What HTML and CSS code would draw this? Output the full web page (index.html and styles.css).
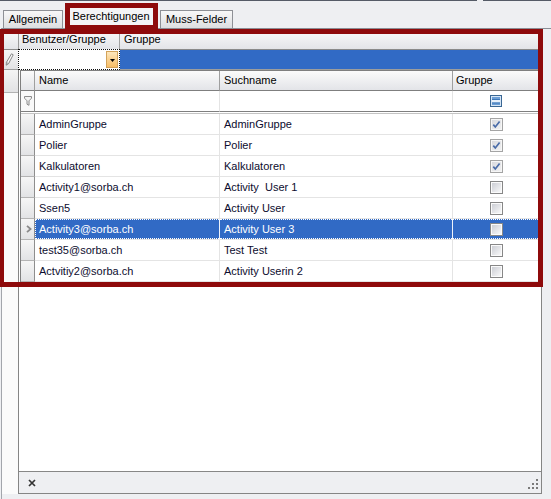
FILE: index.html
```html
<!DOCTYPE html>
<html>
<head>
<meta charset="utf-8">
<link rel="stylesheet" href="styles.css">
</head>
<body>
<div class="app">
  <div class="topbar"><div class="tb-a"></div><div class="tb-b"></div></div>
  <div class="tabs">
    <div class="tab t1">Allgemein</div>
    <div class="tab active">Berechtigungen</div>
    <div class="tab t3">Muss-Felder</div>
  </div>
  <div class="page">
    <div class="master">
      <div class="m-head">
        <div class="m-ind"></div>
        <div class="m-h1">Benutzer/Gruppe</div>
        <div class="m-h2">Gruppe</div>
      </div>
      <div class="m-new">
        <div class="m-ind pen">
          <svg width="9" height="13" viewBox="0 0 9 13"><path d="M6.5 0.8 L8.2 1.8 L3.6 10.6 L1.2 12.2 L1.4 9.4 Z" fill="#fafafa" stroke="#7a7a7a" stroke-width="0.9"/><path d="M1.6 9.6 L3.3 10.5" stroke="#7a7a7a" stroke-width="0.8"/></svg>
        </div>
        <div class="m-edit">
          <span class="dd"><svg width="5" height="6" viewBox="0 0 5 6"><path d="M0 2 H5 L2.5 5 Z" fill="#000"/></svg></span>
        </div>
        <div class="m-sel"></div>
      </div>
      <div class="m-detail">
        <div class="m-side"><div class="m-side-cell"></div></div>
        <div class="detail">
          <div class="inner">
            <div class="row hdr">
              <div class="ind"></div>
              <div class="c">Name</div>
              <div class="c">Suchname</div>
              <div class="c">Gruppe</div>
            </div>
            <div class="row flt">
              <div class="ind">
                <svg width="8" height="10" viewBox="0 0 8 10"><path d="M0.5 0.5 H7.5 V2.2 L5 4.8 V9.3 L3 8.2 V4.8 L0.5 2.2 Z" fill="#f2f2f2" stroke="#8c8c8c"/></svg>
              </div>
              <div class="c"></div>
              <div class="c"></div>
              <div class="c mid">
                <svg width="12" height="12" viewBox="0 0 12 12"><rect x="0.5" y="0.5" width="11" height="11" fill="#6d9fd6" stroke="#3a6794"/><rect x="1.5" y="1.5" width="9" height="9" fill="none" stroke="#d6e6f6"/><rect x="2" y="4.5" width="8" height="3" fill="#e8f1fb"/><rect x="2" y="4" width="8" height="1" fill="#3f78b8"/><rect x="2" y="7.5" width="8" height="1" fill="#3f78b8"/></svg>
              </div>
            </div>
            <div class="sep"></div>
            <div class="row">
              <div class="ind"></div><div class="c">AdminGruppe</div><div class="c">AdminGruppe</div>
              <div class="c mid"><span class="cb on"><svg width="11" height="11" viewBox="0 0 11 11"><path d="M2.3 5.6 L4.3 8 L8.6 2.4" fill="none" stroke="#4a6ca8" stroke-width="1.7"/></svg></span></div>
            </div>
            <div class="row">
              <div class="ind"></div><div class="c">Polier</div><div class="c">Polier</div>
              <div class="c mid"><span class="cb on"><svg width="11" height="11" viewBox="0 0 11 11"><path d="M2.3 5.6 L4.3 8 L8.6 2.4" fill="none" stroke="#4a6ca8" stroke-width="1.7"/></svg></span></div>
            </div>
            <div class="row">
              <div class="ind"></div><div class="c">Kalkulatoren</div><div class="c">Kalkulatoren</div>
              <div class="c mid"><span class="cb on"><svg width="11" height="11" viewBox="0 0 11 11"><path d="M2.3 5.6 L4.3 8 L8.6 2.4" fill="none" stroke="#4a6ca8" stroke-width="1.7"/></svg></span></div>
            </div>
            <div class="row">
              <div class="ind"></div><div class="c">Activity1@sorba.ch</div><div class="c">Activity&nbsp; User 1</div>
              <div class="c mid"><span class="cb"></span></div>
            </div>
            <div class="row">
              <div class="ind"></div><div class="c">Ssen5</div><div class="c">Activity User</div>
              <div class="c mid"><span class="cb"></span></div>
            </div>
            <div class="row sel">
              <div class="ind arrow">
                <svg width="6" height="8" viewBox="0 0 6 8"><path d="M1 0.8 L4.6 4 L1 7.2" fill="none" stroke="#8a8a8a" stroke-width="1.8"/></svg>
              </div>
              <div class="c">Activity3@sorba.ch</div><div class="c">Activity User 3</div>
              <div class="c mid"><span class="cb"></span></div>
            </div>
            <div class="row">
              <div class="ind"></div><div class="c">test35@sorba.ch</div><div class="c">Test Test</div>
              <div class="c mid"><span class="cb"></span></div>
            </div>
            <div class="row">
              <div class="ind"></div><div class="c">Actvitiy2@sorba.ch</div><div class="c">Activity Userin 2</div>
              <div class="c mid"><span class="cb"></span></div>
            </div>
          </div>
          <div class="d-empty"></div>
          <div class="d-bar">
            <span class="xbtn"><svg width="8" height="8" viewBox="0 0 8 8"><path d="M1 1 L7 7 M7 1 L1 7" stroke="#333" stroke-width="1.7"/></svg></span>
            <span class="grip"><svg width="11" height="11" viewBox="0 0 11 11"><rect x="8" y="0" width="2" height="2" fill="#7a7a7a"/><rect x="4" y="4" width="2" height="2" fill="#7a7a7a"/><rect x="8" y="4" width="2" height="2" fill="#7a7a7a"/><rect x="0" y="8" width="2" height="2" fill="#7a7a7a"/><rect x="4" y="8" width="2" height="2" fill="#7a7a7a"/><rect x="8" y="8" width="2" height="2" fill="#7a7a7a"/></svg></span>
          </div>
        </div>
      </div>
    </div>
  </div>
  <div class="mark mark-tab"></div>
  <div class="mark mark-grid"></div>
</div>
</body>
</html>
```

FILE: styles.css
```css
html, body {
  margin: 0;
  padding: 0;
}
body {
  font-family: "Liberation Sans", Arial, sans-serif;
  font-size: 11px;
  color: #000;
}
.app {
  position: relative;
  width: 551px;
  height: 499px;
  overflow: hidden;
  background: #eeeff2;
  display: flex;
  flex-direction: column;
}
.topbar {
  display: flex;
  height: 1px;
}
.tb-a {
  width: 477px;
  background: #555b67;
}
.tb-b {
  flex: 1;
  margin-left: 6px;
  background: #555b67;
}
.tabs {
  height: 27px;
  display: flex;
  align-items: flex-end;
  padding-left: 3px;
  position: relative;
  z-index: 2;
}
.tab {
  box-sizing: border-box;
  height: 18px;
  border: 1px solid #8e9096;
  border-bottom: none;
  background: linear-gradient(#f8f8f8, #dddee1);
  text-align: center;
  line-height: 17px;
  white-space: nowrap;
}
.t1 {
  width: 60px;
}
.tab.active {
  width: 92px;
  height: 24px;
  margin-left: 2px;
  margin-bottom: -1px;
  background: #f4f4f6;
  line-height: 20px;
}
.t3 {
  width: 73px;
  margin-left: 3px;
}
.page {
  flex: 1;
  border-top: 1px solid #8a8d95;
  margin-left: 1px;
  border-left: 1px solid #a3a6ac;
  display: flex;
  flex-direction: column;
}
.master {
  width: 540px;
  display: flex;
  flex-direction: column;
}
.m-head {
  display: flex;
  height: 20px;
  border-bottom: 1px solid #8a8a8a;
}
.m-head > div {
  background: linear-gradient(#fbfbfb, #e3e4e8);
  line-height: 21px;
  white-space: nowrap;
}
.m-ind {
  box-sizing: border-box;
  width: 17px;
  border-right: 1px solid #9a9a9a;
  background: linear-gradient(#f6f6f6, #e2e2e4);
}
.m-h1 {
  box-sizing: border-box;
  width: 101px;
  border-right: 1px solid #a2a2a2;
  padding-left: 3px;
}
.m-h2 {
  flex: 1;
  padding-left: 4px;
}
.m-new {
  display: flex;
  height: 19px;
  border-bottom: 1px solid #9d9d9d;
}
.pen {
  display: flex;
  align-items: center;
  justify-content: center;
  padding-right: 2px;
}
.m-edit {
  box-sizing: border-box;
  position: relative;
  z-index: 1;
  width: 102px;
  height: 21px;
  margin-left: -1px;
  margin-top: -1px;
  border: 1px dotted #111;
  background: #fff;
  display: flex;
  justify-content: flex-end;
  align-items: center;
  padding-right: 1px;
}
.dd {
  box-sizing: border-box;
  width: 12px;
  height: 17px;
  border: 1px solid #d3a35a;
  background: linear-gradient(#fde7bd, #f7bd66);
  display: flex;
  align-items: center;
  justify-content: center;
}
.m-sel {
  flex: 1;
  background: #316ac5;
}
.m-detail {
  display: flex;
  height: 424px;
}
.m-side {
  width: 16px;
  background: #fbfbfb;
}
.m-side-cell {
  height: 22px;
  border-bottom: 1px solid #b2b2b2;
  background: linear-gradient(#f4f4f4, #e2e2e4);
}
.detail {
  flex: 1;
  box-sizing: border-box;
  border-left: 1px solid #858585;
  border-right: 1px solid #858585;
  border-bottom: 1px solid #858585;
  background: #fff;
  display: flex;
  flex-direction: column;
  padding-left: 1px;
}
.inner {
  border-left: 1px solid #7f7f7f;
  border-top: 1px solid #7f7f7f;
}
.row {
  display: grid;
  grid-template-columns: 14px 185px 233px 88px;
  height: 21px;
}
.row > div {
  box-sizing: border-box;
  border-right: 1px solid #e4e4e4;
  border-bottom: 1px solid #e4e4e4;
  position: relative;
}
.c {
  padding-left: 4px;
  line-height: 20px;
  white-space: nowrap;
  overflow: hidden;
  color: #0c0c2e;
}
.row > .ind {
  background: linear-gradient(#f6f6f6, #e2e3e5);
  border-right: 1px solid #8e8e8e;
  border-bottom: 1px solid #b4b4b4;
  display: flex;
  align-items: center;
  justify-content: center;
}
.row.hdr {
  height: 20px;
}
.row.hdr > div {
  background: linear-gradient(#fbfbfb, #e3e4e8);
  border-right: 1px solid #9f9f9f;
  border-bottom: 1px solid #7f7f7f;
  color: #000;
  line-height: 19px;
}
.row.hdr > .c:last-child {
  padding-left: 3px;
}
.row.flt > div {
  border-bottom: 1px solid #7f7f7f;
}
.row.flt > .ind {
  background: #f9f9f9;
  border-bottom: 1px solid #7f7f7f;
}
.mid {
  display: flex;
  align-items: center;
  justify-content: center;
  padding-left: 0;
  padding-right: 1px;
}
.sep {
  height: 1px;
  border-bottom: 1px solid #c4c4c4;
  background: #fff;
}
.cb {
  box-sizing: border-box;
  width: 13px;
  height: 13px;
  border: 1px solid #878787;
  background: linear-gradient(135deg, #c8cad1, #fdfdfd);
  box-shadow: inset 0 0 0 1px #fbfbfb;
  display: flex;
  align-items: center;
  justify-content: center;
}
.cb.on {
  border-color: #a4a4a4;
  background: linear-gradient(135deg, #d6d7dc, #f3f3f3);
  box-shadow: inset 0 0 0 1px #f6f6f6;
}
.row.sel > .c {
  background: #316ac5;
  color: #fff;
  border-right-color: #eef2fa;
}
.row.sel > .c::before {
  content: "";
  position: absolute;
  left: 0;
  right: 0;
  top: 0;
  bottom: 0;
  border-top: 1px dotted #fff;
  border-bottom: 1px dotted #fff;
}
.row.sel > .c:nth-child(2)::before {
  border-left: 1px dotted #fff;
}
.arrow {
  padding-left: 2px;
}
.d-empty {
  flex: 1;
}
.d-bar {
  height: 21px;
  border-top: 1px solid #878787;
  background: #eeeff2;
  margin-left: -1px;
  display: flex;
  align-items: center;
  justify-content: space-between;
  padding: 0 2px 0 9px;
}
.xbtn {
  display: flex;
  margin-top: 1px;
}
.grip {
  display: flex;
  margin-top: 4px;
}
.mark {
  position: absolute;
  box-sizing: border-box;
  border: 5px solid #8e0a0b;
  z-index: 5;
}
.mark-tab {
  left: 65px;
  top: 3px;
  width: 93px;
  height: 27px;
}
.mark-grid {
  left: -1px;
  top: 29px;
  width: 544px;
  height: 258px;
}
```
